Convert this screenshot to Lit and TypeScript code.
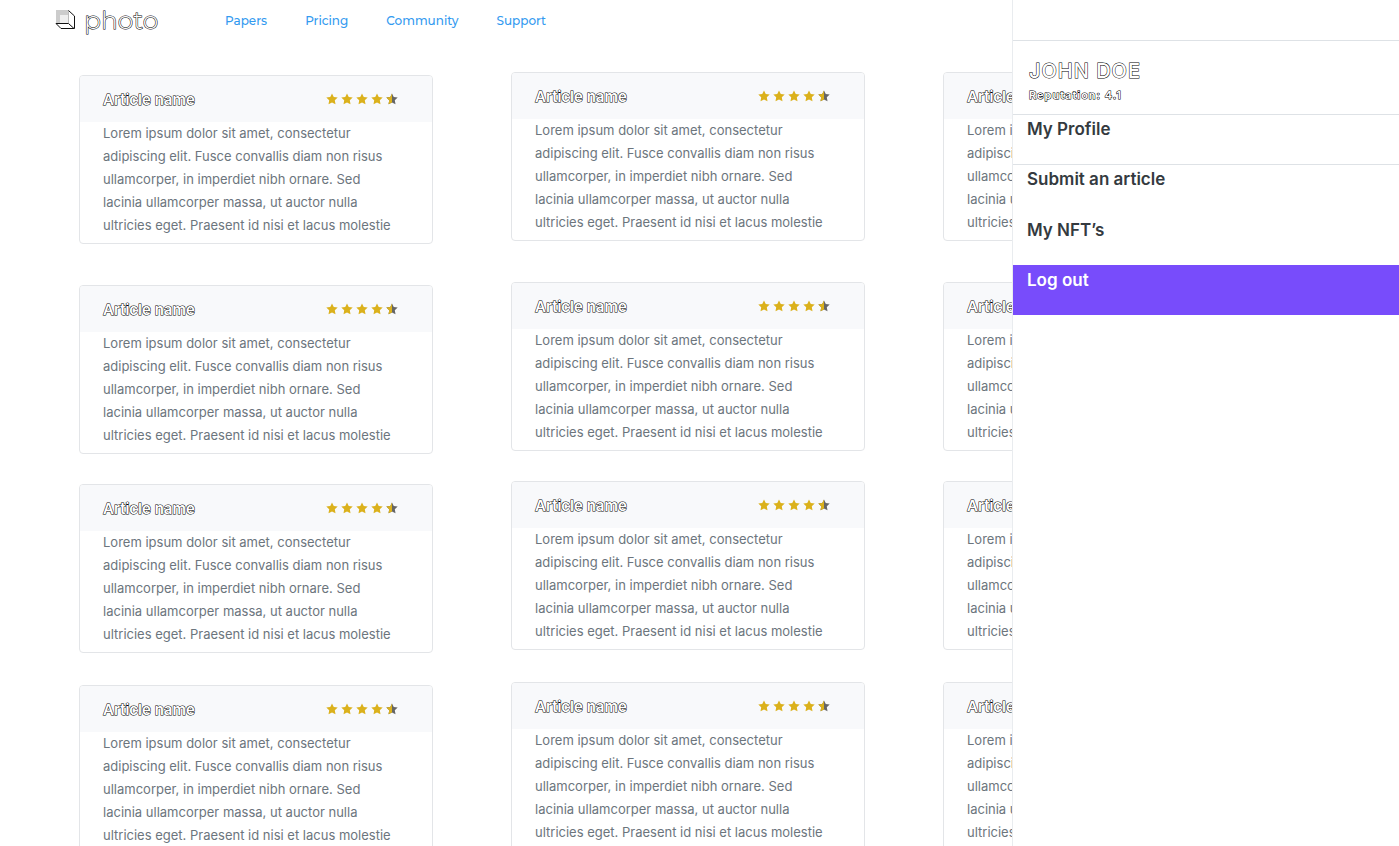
import { LitElement, html, css, svg } from "lit";
import { customElement, property } from "lit/decorators.js";

const STAR = "M6 0.4L7.75 4L11.7 4.5L8.8 7.3L9.5 11.3L6 9.4L2.5 11.3L3.2 7.3L0.3 4.5L4.25 4Z";

@customElement("star-rating")
class StarRating extends LitElement {
  @property({ type: Number }) value = 0;

  static styles = css`
    :host {
      display: flex;
      gap: 3px;
    }
    .star {
      display: block;
      width: 12px;
      height: 12px;
    }
    .full {
      fill: #dbb11c;
    }
    .empty {
      fill: #666666;
    }
  `;

  private star(index: number) {
    const half = this.value - index < 1;
    return html`<svg class="star" viewBox="0 0 12 12" aria-hidden="true">
      ${half
        ? svg`<path class="empty" d=${STAR} /><path class="full" d="M6 0.4V9.4L2.5 11.3L3.2 7.3L0.3 4.5L4.25 4Z" />`
        : svg`<path class="full" d=${STAR} />`}
    </svg>`;
  }

  render() {
    return html`${[0, 1, 2, 3, 4].map((i) => this.star(i))}`;
  }
}

@customElement("article-card")
class ArticleCard extends LitElement {
  static styles = css`
    :host {
      display: block;
      box-sizing: border-box;
      border: 1px solid #e3e5e8;
      border-radius: 4px;
      background: #ffffff;
      overflow: hidden;
    }
    .head {
      display: flex;
      align-items: center;
      justify-content: space-between;
      height: 46px;
      padding: 0 34px 0 23px;
      background: #f8f9fb;
    }
    .title {
      margin: 0;
      font: 600 15px/24px Inter, sans-serif;
      color: #ffffff;
      -webkit-text-stroke: 1px #000000;
      paint-order: stroke fill;
      padding-top: 2px;
    }
    .text {
      margin: 0;
      padding: 0 32px 6px 23px;
      font: 400 13px/23px Inter, sans-serif;
      color: #6c757d;
    }
  `;

  render() {
    return html`
      <div class="head">
        <h2 class="title">Article name</h2>
        <star-rating value="4.5" role="img" aria-label="4.5 out of 5"></star-rating>
      </div>
      <p class="text">
        Lorem ipsum dolor sit amet, consectetur adipiscing elit. Fusce convallis diam non risus
        ullamcorper, in imperdiet nibh ornare. Sed lacinia ullamcorper massa, ut auctor nulla
        ultricies eget. Praesent id nisi et lacus molestie
      </p>
    `;
  }
}

@customElement("app-root")
class AppRoot extends LitElement {
  static styles = css`
    :host {
      display: block;
      position: relative;
      height: 100vh;
      overflow: hidden;
      background: #ffffff;
      font-family: Inter, sans-serif;
    }
    .bar {
      display: flex;
      align-items: center;
      height: 40px;
      padding-left: 55px;
    }
    .brand {
      display: flex;
      align-items: center;
      gap: 9px;
      width: 170px;
      text-decoration: none;
    }
    .mark {
      width: 20px;
      height: 20px;
    }
    .word {
      font: 300 25px/40px Montserrat, sans-serif;
      color: #ffffff;
      -webkit-text-stroke: 1px #000000;
      paint-order: stroke fill;
    }
    .links {
      display: flex;
      gap: 38px;
      padding-top: 2px;
    }
    .link {
      font: 500 12px/20px Montserrat, Inter, sans-serif;
      color: #339af0;
      text-decoration: none;
    }
    .board {
      display: flex;
      gap: 78px;
      padding: 32px 79px 0;
    }
    .column {
      flex: none;
      width: 354px;
    }
    .column:first-child {
      padding-top: 3px;
    }
    .card {
      margin-bottom: 32px;
    }
    .card:first-child {
      margin-bottom: 41px;
    }
    .card:nth-child(2) {
      margin-bottom: 30px;
    }
    .drawer {
      position: absolute;
      top: 0;
      right: 0;
      bottom: 0;
      width: 386px;
      box-shadow: -1px 0 #e9ecef;
      background: #ffffff;
    }
    .user {
      margin-top: 40px;
      padding: 16px 16px 8px;
      border-top: 1px solid #dee2e6;
    }
    .name {
      margin: 0;
      font: 500 20px/28px Inter, sans-serif;
      letter-spacing: 1px;
      color: #ffffff;
      -webkit-text-stroke: 1px #000000;
      paint-order: stroke fill;
    }
    .rep {
      margin: 0;
      font: 600 11px/20px Inter, sans-serif;
      letter-spacing: 1px;
      color: #ffffff;
      -webkit-text-stroke: 1px #000000;
      paint-order: stroke fill;
      padding-bottom: 1px;
    }
    .item {
      display: block;
      box-sizing: border-box;
      height: 50px;
      padding: 2px 14px;
      border-top: 1px solid #dee2e6;
      font: 600 17px/24px Inter, sans-serif;
      color: #343a40;
      text-decoration: none;
    }
    .plain {
      margin-top: 1px;
      border-top-color: transparent;
    }
    .logout {
      width: 100%;
      padding-bottom: 22px;
      border: 0;
      background: #784cfb;
      color: #ffffff;
      text-align: left;
    }
  `;

  render() {
    return html`
      <header class="bar">
        <a class="brand" href="#">
          <svg class="mark" viewBox="0 0 20 20" fill="none" aria-hidden="true">
            <path fill="#cccccc" d="M1 0H13.5V5H5V14H1Z" />
            <path fill="#eeeeee" d="M5 5H13.5V14H5Z" />
            <path stroke="#bbbbbb" d="M13.5 0.5V13" />
            <path stroke="#111111" d="M13.5 0.5L19.5 6V18.5H6L1 13.5H13.5L19 18.5" />
          </svg>
          <span class="word">photo</span>
        </a>
        <nav class="links">
          ${["Papers", "Pricing", "Community", "Support"].map(
            (label) => html`<a class="link" href="#">${label}</a>`
          )}
        </nav>
      </header>
      <main class="board">
        ${[0, 1, 2].map(
          () => html`<section class="column">
            ${[0, 1, 2, 3].map(() => html`<article-card class="card"></article-card>`)}
          </section>`
        )}
      </main>
      <aside class="drawer">
        <div class="user">
          <h1 class="name">JOHN DOE</h1>
          <p class="rep">Reputation: 4.1</p>
        </div>
        <nav>
          <a class="item" href="#">My Profile</a>
          <a class="item" href="#">Submit an article</a>
          <a class="item plain" href="#">My NFT’s</a>
          <button class="item logout" type="button">Log out</button>
        </nav>
      </aside>
    `;
  }
}
